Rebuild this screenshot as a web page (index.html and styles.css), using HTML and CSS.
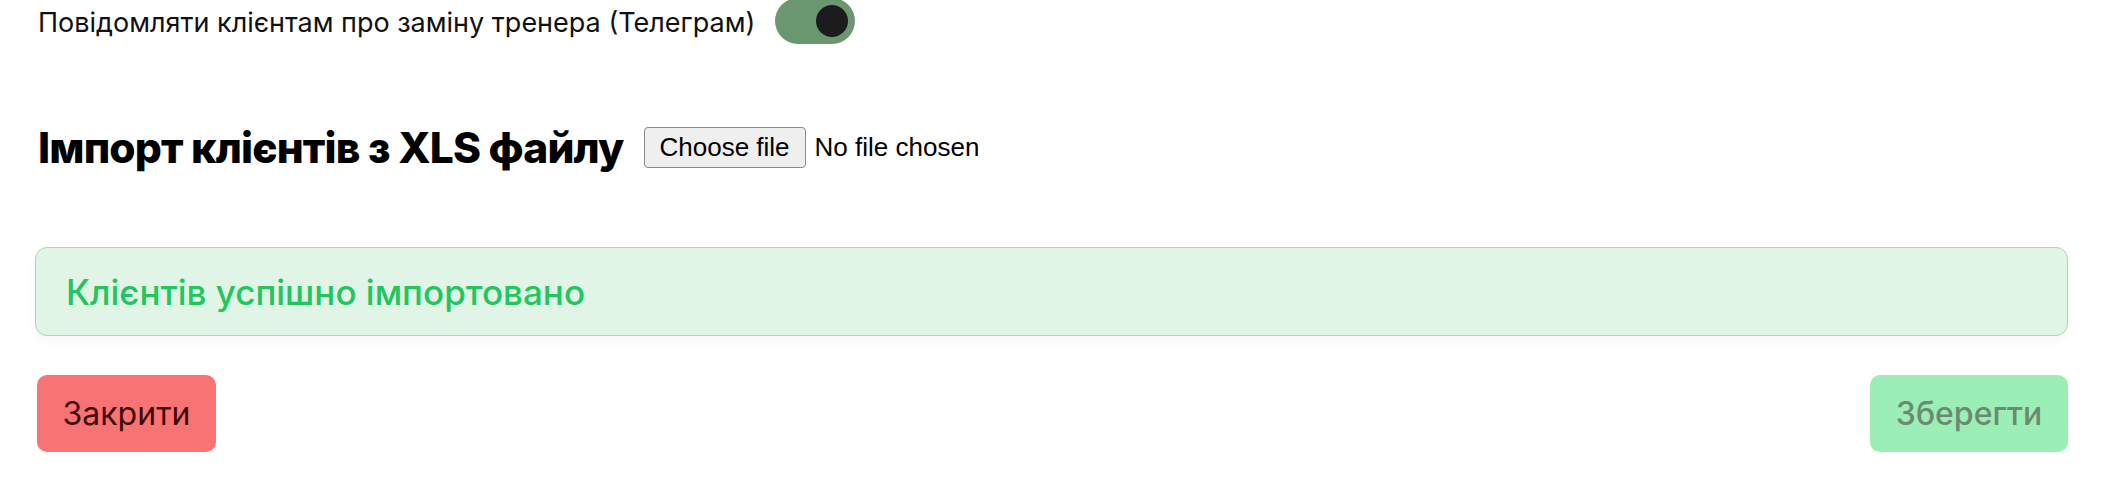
FILE: index.html
```html
<!DOCTYPE html>
<html lang="uk">
<head>
<meta charset="utf-8">
<title>Імпорт клієнтів</title>
<link rel="stylesheet" href="styles.css">
</head>
<body>
<div class="page">
  <div class="setting-row">
    <span class="setting-label">Повідомляти клієнтам про заміну тренера (Телеграм)</span>
    <span class="toggle"><span class="knob"></span></span>
  </div>

  <div class="import-row">
    <h2 class="import-title">Імпорт клієнтів з XLS файлу</h2>
    <label class="file-picker">
      <input class="file-native" type="file" accept=".xls,.xlsx">
      <span class="file-btn">Choose file</span>
      <span class="file-name">No file chosen</span>
    </label>
  </div>

  <div class="alert">Клієнтів успішно імпортовано</div>

  <div class="actions">
    <button class="btn btn-close" type="button">Закрити</button>
    <button class="btn btn-save" type="button">Зберегти</button>
  </div>
</div>
</body>
</html>
```

FILE: styles.css
```css
html, body {
  margin: 0;
  padding: 0;
  background: #ffffff;
}

body {
  font-family: Inter, "Noto Sans", sans-serif;
  color: #111111;
}

.page {
  padding: 0 56px 0 35px;
}

.setting-row {
  display: flex;
  align-items: center;
  gap: 20px;
  height: 44px;
  padding-left: 3px;
}

.setting-label {
  font-size: 27px;
  font-weight: 400;
  color: #111111;
}

.toggle {
  display: flex;
  align-items: center;
  justify-content: flex-end;
  width: 80px;
  height: 46px;
  box-sizing: border-box;
  padding: 0 7px;
  border-radius: 23px;
  background: #6b9770;
  margin-top: -2px;
}

.knob {
  width: 32px;
  height: 32px;
  border-radius: 50%;
  background: #1c1c1e;
}

.import-row {
  display: flex;
  align-items: center;
  gap: 20px;
  height: 41px;
  margin-top: 83px;
  padding-left: 3px;
}

.import-title {
  margin: 0;
  font-size: 42.5px;
  line-height: 41px;
  font-weight: 800;
  letter-spacing: -0.85px;
  color: #000000;
  white-space: nowrap;
}

.file-picker {
  display: flex;
  align-items: center;
  gap: 9px;
  font-family: "Liberation Sans", Arial, sans-serif;
  font-size: 26px;
  color: #000000;
  cursor: pointer;
}

.file-native {
  display: none;
}

.file-btn {
  display: flex;
  align-items: center;
  height: 41px;
  box-sizing: border-box;
  padding: 0 15px;
  background: #efefef;
  border: 1.5px solid #8a8a8a;
  border-radius: 4px;
}

.file-name {
  white-space: nowrap;
}

.alert {
  margin-top: 79px;
  height: 89px;
  box-sizing: border-box;
  display: flex;
  align-items: center;
  padding-left: 30px;
  border: 1.5px solid #aed5b5;
  border-radius: 12px;
  background: #e0f5e6;
  box-shadow: 0 5px 12px rgba(0, 0, 0, 0.03);
  color: #22c55e;
  font-size: 35px;
  font-weight: 500;
}

.actions {
  display: flex;
  justify-content: space-between;
  margin-top: 39px;
  padding-left: 2px;
}

.btn {
  height: 77px;
  border: none;
  border-radius: 10px;
  font-family: Inter, "Noto Sans", sans-serif;
  font-size: 32px;
  font-weight: 400;
  cursor: pointer;
}

.btn-close {
  width: 179px;
  background: #f87373;
  color: #3f0b0b;
}

.btn-save {
  width: 198px;
  background: #9beeb5;
  color: #6a8b72;
  font-weight: 500;
}
```
